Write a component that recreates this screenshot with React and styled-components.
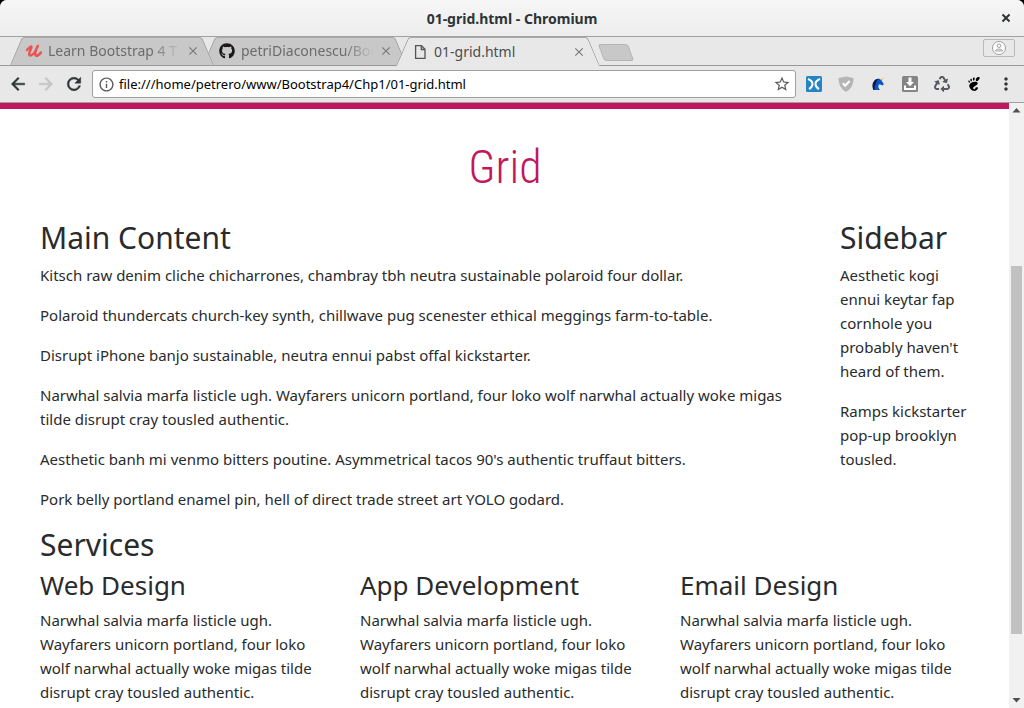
import React from "react";
import styled, { createGlobalStyle, css } from "styled-components";
import { MdArrowBack, MdArrowForward, MdRefresh, MdStarBorder, MdMoreVert, MdClose, MdInfoOutline } from "react-icons/md";
import { FaGithub, FaRecycle } from "react-icons/fa";
import { SiGnome } from "react-icons/si";

const ui = `"Noto Sans", "Open Sans", sans-serif`;

const GlobalStyle = createGlobalStyle`
  *, *::before, *::after { box-sizing: border-box; }
  html { background: #000; }
  body { margin: 0; font-family: ${ui}; }
  h1, h2, h3, p { margin: 0; }
  button { border: 0; padding: 0; background: none; font: inherit; color: inherit; }
`;

const Window = styled.div`
  display: flex;
  flex-direction: column;
  height: 100vh;
  overflow: hidden;
  border-radius: 7px 7px 0 0;
  background: #e8e8e8;
`;

const TitleBar = styled.header`
  display: flex;
  align-items: center;
  height: 37px;
  flex: none;
  padding: 0 9px 0 27px;
  border-bottom: 1px solid #a1a1a1;
  background: linear-gradient(#f6f6f6, #ededed);
`;

const WindowTitle = styled.div`
  flex: 1;
  text-align: center;
  font-size: 14px;
  font-weight: 700;
  color: #2e3436;
`;

const IconButton = styled.button`
  display: flex;
  flex: none;
  align-items: center;
  justify-content: center;
  width: ${(p) => p.$size || 20}px;
  height: ${(p) => p.$size || 20}px;
  color: ${(p) => p.$color || "#2e3436"};
`;

const TabStrip = styled.nav`
  display: flex;
  flex: none;
  height: 29px;
  padding: 0 9px 0 10px;
  border-bottom: 1px solid #999;
`;

const activeTab = css`
  --fill: #e8e8e8;
  z-index: 2;
  height: 29px;
  color: #4c4c4c;
`;

const Tab = styled.div`
  --fill: #c8c8c8;
  position: relative;
  z-index: ${(p) => p.$layer};
  display: flex;
  align-items: center;
  width: 204px;
  height: 28px;
  margin-right: -11px;
  padding: 0 13px 0 16px;
  color: #6c6c6c;
  ${(p) => p.$active && activeTab}

  > svg {
    flex: none;
    margin-right: 6px;
  }

  &::before, &::after {
    content: "";
    position: absolute;
    z-index: -1;
    top: 0;
    bottom: 0;
    width: 50%;
    border-top: 1px solid #a8a8a8;
    background: var(--fill);
  }
  &::before {
    left: 0;
    border-left: 1px solid #999;
    border-top-left-radius: 3px;
    transform: skewX(-23deg);
    transform-origin: bottom left;
  }
  &::after {
    right: 0;
    border-right: 1px solid #999;
    border-top-right-radius: 3px;
    transform: skewX(23deg);
    transform-origin: bottom right;
  }
`;

const TabLabel = styled.a`
  flex: 1;
  min-width: 0;
  white-space: nowrap;
  font-size: 14px;
  line-height: 20px;
  color: inherit;
  text-decoration: none;
  ${(p) => p.$fade && css`mask-image: linear-gradient(to right, #000 75%, transparent 97%);`}
`;

const NewTab = styled.button`
  width: 30px;
  height: 17px;
  margin: 7px 0 0 12px;
  border: 1px solid #b4b4b4;
  border-radius: 3px;
  background: #c8c8c8;
  transform: skewX(20deg);
`;

const ProfileButton = styled.button`
  display: flex;
  align-items: center;
  justify-content: center;
  width: 32px;
  height: 18px;
  margin: 2px 0 0 auto;
  border: 1px solid #b8b8b8;
  border-radius: 2px;
`;

const Toolbar = styled.div`
  display: flex;
  flex: none;
  align-items: center;
  height: 37px;
  padding: 0 8px;
  border-bottom: 1px solid #a0a0a0;
`;

const NavButtons = styled.div`
  display: flex;
  gap: 8px;
  margin-right: 8px;

  path:last-child {
    stroke: currentColor;
    stroke-width: 0.6;
  }
`;

const AddressBar = styled.label`
  display: flex;
  flex: 1;
  align-items: center;
  gap: 4px;
  height: 28px;
  padding: 0 4px 0 5px;
  border: 1px solid #a0a0a0;
  border-radius: 3px;
  background: #fff;
`;

const AddressInput = styled.input`
  flex: 1;
  min-width: 0;
  padding: 0;
  border: 0;
  outline: 0;
  background: none;
  font-family: ${ui};
  font-size: 13px;
  line-height: 20px;
  color: #000;
`;

const Extensions = styled.div`
  display: flex;
  gap: 12px;
  margin-left: 8px;
`;

const Viewport = styled.div`
  display: flex;
  flex: 1;
  min-height: 0;
  background: #fff;
`;

const Page = styled.main`
  flex: 1;
  min-width: 0;
  overflow: hidden;
  padding: 32px 39px 0 40px;
  border-top: 6px solid #c2185b;
  font-size: 15px;
  line-height: 24px;
  color: #292b2c;
`;

const PageTitle = styled.h1`
  margin-bottom: 26px;
  text-align: center;
  font-family: "Roboto Condensed", Roboto, sans-serif;
  font-size: 46px;
  font-weight: 300;
  line-height: 53px;
  color: #c2185b;
`;

const Grid = styled.div`
  display: grid;
  grid-template-columns: repeat(12, minmax(0, 1fr));
  column-gap: 30px;
`;

const Column = styled.section`
  grid-column: span ${(p) => p.$span};
`;

const Heading = styled.h2`
  margin-bottom: 8px;
  font-size: 30px;
  font-weight: 400;
  line-height: 35px;
`;

const SubHeading = styled.h3`
  margin-bottom: 8px;
  font-size: 26px;
  font-weight: 400;
  line-height: 30px;
`;

const Paragraph = styled.p`
  margin-bottom: 16px;
`;

const ScrollBar = styled.div`
  display: flex;
  flex: none;
  flex-direction: column;
  align-items: center;
  width: 15px;
  background: #f1f1f1;
`;

const ScrollTrack = styled.div`
  display: flex;
  flex: 1;
  flex-direction: column;
`;

const Spacer = styled.div`
  flex: ${(p) => p.$grow};
`;

const Thumb = styled.div`
  flex: 368;
  width: 11px;
  background: #c1c1c1;
`;

const UdemyLogo = () => (
  <svg width="16" height="16" viewBox="0 0 16 16" fill="none" stroke="#eb5252" strokeLinecap="round" strokeLinejoin="round">
    <path d="M1 7C2.500 5 5.800 2.200 5.500 4.300S3 8.800 3.200 11.300C3.500 14 7.500 11.500 9.300 8.500" strokeWidth="2.400" />
    <path d="M11.800 3C10.500 5.500 8.500 9.200 9.300 11.500S13 12.500 15 9.500" strokeWidth="2.600" />
  </svg>
);

const PageIcon = () => (
  <svg width="16" height="16" viewBox="0 0 16 16" fill="none" stroke="#555" strokeWidth="1.300">
    <path d="M3.600 1.600H9.500L13 5.200V14.400H3.600ZM9.300 1.600V5.500H13" />
  </svg>
);

const PersonIcon = () => (
  <svg width="16" height="16" viewBox="0 0 16 16" fill="none" stroke="#a0a0a0">
    <circle cx="8" cy="8" r="6.500" fill="#fff" />
    <circle cx="8" cy="5.700" r="1.800" />
    <path d="M4.500 11C4.700 8.500 11.300 8.500 11.500 11Z" />
  </svg>
);

const ButterflyIcon = () => (
  <svg width="16" height="16" viewBox="0 0 16 16">
    <rect width="16" height="16" rx="1.500" fill="#2484c6" />
    <path d="M2 3C4.500 4 6.500 5.500 6.500 8S5 12 3 13.200M14 3C11.500 4 9.500 5.500 9.500 8S11 12 13 13.200" fill="none" stroke="#fff" strokeWidth="2" />
  </svg>
);

const ShieldIcon = () => (
  <svg width="16" height="16" viewBox="0 0 16 16">
    <path d="M8 0.500L15.500 2C15.500 8.500 13 13.500 8 15.700C3 13.500.5 8.500.5 2Z" fill="#b5b5b5" />
    <path d="M4.800 7.300L7.200 9.700L11.600 5" fill="none" stroke="#fff" strokeWidth="2" />
  </svg>
);

const UnicornIcon = () => (
  <svg width="16" height="16" viewBox="0 0 16 16">
    <path d="M9.500 4L13.800 1.500L11.800 5Z" fill="#f0c040" />
    <path d="M3.500 14C2.500 10 3.500 5 6.500 3.500L9.500 2.800L11.500 4.500L13.800 8L12.800 9.500L9.500 8.300C7.500 10 8.500 12 10 14Z" fill="#0b56c4" />
    <path d="M3.500 14C1.500 10 2.500 5 6 3.200L9 2.500C6 5 6.500 7.500 5.300 9.500S5 13 4.500 14Z" fill="#0a1c50" />
  </svg>
);

const DownloadIcon = () => (
  <svg width="16" height="16" viewBox="0 0 16 16">
    <rect width="16" height="16" rx="1.500" fill="#858585" />
    <path d="M6.500 1.500H9.500V6H12L8 10.200L4 6H6.500ZM2 9.500H4V12H12V9.500H14V14H2Z" fill="#fff" />
  </svg>
);

const Arrow = ({ down }) => (
  <svg width="9" height="5" viewBox="0 0 9 5">
    <path d={down ? "M.5 0H8.500L4.500 4.500Z" : "M.5 4.500H8.500L4.500 0Z"} fill="#505050" />
  </svg>
);

const mainText = [
  "Kitsch raw denim cliche chicharrones, chambray tbh neutra sustainable polaroid four dollar.",
  "Polaroid thundercats church-key synth, chillwave pug scenester ethical meggings farm-to-table.",
  "Disrupt iPhone banjo sustainable, neutra ennui pabst offal kickstarter.",
  "Narwhal salvia marfa listicle ugh. Wayfarers unicorn portland, four loko wolf narwhal actually woke migas tilde disrupt cray tousled authentic.",
  "Aesthetic banh mi venmo bitters poutine. Asymmetrical tacos 90's authentic truffaut bitters.",
  "Pork belly portland enamel pin, hell of direct trade street art YOLO godard.",
];

const sidebarText = [
  "Aesthetic kogi ennui keytar fap cornhole you probably haven't heard of them.",
  "Ramps kickstarter pop-up brooklyn tousled.",
];

const services = ["Web Design", "App Development", "Email Design"];

const extensions = [
  ["Butterfly", <ButterflyIcon />],
  ["Shield", <ShieldIcon />],
  ["Unicorn", <UnicornIcon />],
  ["Downloads", <DownloadIcon />],
  ["Recycle", <FaRecycle size={16} color="#555b61" />],
  ["GNOME", <SiGnome size={14} color="#000" />],
  ["Menu", <MdMoreVert size={20} />],
];

const tabs = [
  { label: "Learn Bootstrap 4 T", icon: <UdemyLogo />, layer: 1, fade: true },
  { label: "petriDiaconescu/Boo", icon: <FaGithub size={16} color="#1b1817" />, layer: 0, fade: true },
  { label: "01-grid.html", icon: <PageIcon />, layer: 2, active: true },
];

export default function App() {
  return (
    <>
      <GlobalStyle />
      <Window>
        <TitleBar>
          <WindowTitle>01-grid.html - Chromium</WindowTitle>
          <IconButton $size={18} aria-label="Close window">
            <svg width="10" height="10" viewBox="0 0 10 10" stroke="#2e3436" strokeWidth="2">
              <path d="M1.500 1.500L8.500 8.500M8.500 1.500L1.500 8.500" />
            </svg>
          </IconButton>
        </TitleBar>
        <TabStrip>
          {tabs.map((t) => (
            <Tab key={t.label} $active={t.active} $layer={t.layer}>
              {t.icon}
              <TabLabel href="#" $fade={t.fade}>{t.label}</TabLabel>
              <IconButton $size={16} $color="#777" aria-label="Close tab"><MdClose size={14} /></IconButton>
            </Tab>
          ))}
          <NewTab aria-label="New tab" />
          <ProfileButton aria-label="Profile"><PersonIcon /></ProfileButton>
        </TabStrip>
        <Toolbar>
          <NavButtons>
            <IconButton aria-label="Back"><MdArrowBack size={20} /></IconButton>
            <IconButton aria-label="Forward" $color="#c4c4c4"><MdArrowForward size={20} /></IconButton>
            <IconButton aria-label="Reload"><MdRefresh size={20} /></IconButton>
          </NavButtons>
          <AddressBar>
            <MdInfoOutline size={17} color="#5a5a5a" />
            <AddressInput type="text" aria-label="Address" defaultValue="file:///home/petrero/www/Bootstrap4/Chp1/01-grid.html" />
            <IconButton $size={18} $color="#5a5a5a" aria-label="Bookmark"><MdStarBorder size={18} /></IconButton>
          </AddressBar>
          <Extensions>
            {extensions.map(([name, icon]) => (
              <IconButton key={name} aria-label={name}>{icon}</IconButton>
            ))}
          </Extensions>
        </Toolbar>
        <Viewport>
          <Page>
            <PageTitle>Grid</PageTitle>
            <Grid>
              <Column $span={10}>
                <Heading>Main Content</Heading>
                {mainText.map((t) => <Paragraph key={t}>{t}</Paragraph>)}
              </Column>
              <Column $span={2}>
                <Heading>Sidebar</Heading>
                {sidebarText.map((t) => <Paragraph key={t}>{t}</Paragraph>)}
              </Column>
            </Grid>
            <Heading>Services</Heading>
            <Grid>
              {services.map((name) => (
                <Column key={name} $span={4}>
                  <SubHeading>{name}</SubHeading>
                  <Paragraph>{mainText[3]}</Paragraph>
                </Column>
              ))}
            </Grid>
          </Page>
          <ScrollBar>
            <IconButton $size={15} aria-label="Scroll up"><Arrow /></IconButton>
            <ScrollTrack>
              <Spacer $grow={148} />
              <Thumb />
              <Spacer $grow={59} />
            </ScrollTrack>
            <IconButton $size={15} aria-label="Scroll down"><Arrow down /></IconButton>
          </ScrollBar>
        </Viewport>
      </Window>
    </>
  );
}
